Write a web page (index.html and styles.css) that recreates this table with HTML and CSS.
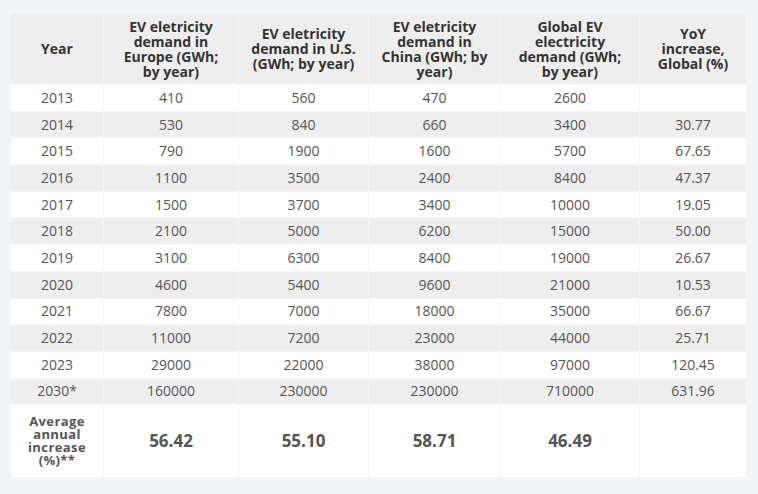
FILE: index.html
```html
<!DOCTYPE html>
<html>
<head>
<meta charset="utf-8">
<link rel="stylesheet" href="styles.css">
</head>
<body>
<div class="page">
<table class="ev">
<colgroup>
<col class="c1"><col class="c2"><col class="c3"><col class="c4"><col class="c5"><col class="c6">
</colgroup>
<thead>
<tr>
<th>Year</th>
<th>EV eletricity<br>demand in<br>Europe (GWh;<br>by year)</th>
<th>EV eletricity<br>demand in U.S.<br>(GWh; by year)</th>
<th>EV eletricity<br>demand in<br>China (GWh; by<br>year)</th>
<th>Global EV<br>electricity<br>demand (GWh;<br>by year)</th>
<th>YoY<br>increase,<br>Global (%)</th>
</tr>
</thead>
<tbody>
<tr><td>2013</td><td>410</td><td>560</td><td>470</td><td>2600</td><td></td></tr>
<tr><td>2014</td><td>530</td><td>840</td><td>660</td><td>3400</td><td>30.77</td></tr>
<tr><td>2015</td><td>790</td><td>1900</td><td>1600</td><td>5700</td><td>67.65</td></tr>
<tr><td>2016</td><td>1100</td><td>3500</td><td>2400</td><td>8400</td><td>47.37</td></tr>
<tr><td>2017</td><td>1500</td><td>3700</td><td>3400</td><td>10000</td><td>19.05</td></tr>
<tr><td>2018</td><td>2100</td><td>5000</td><td>6200</td><td>15000</td><td>50.00</td></tr>
<tr><td>2019</td><td>3100</td><td>6300</td><td>8400</td><td>19000</td><td>26.67</td></tr>
<tr><td>2020</td><td>4600</td><td>5400</td><td>9600</td><td>21000</td><td>10.53</td></tr>
<tr><td>2021</td><td>7800</td><td>7000</td><td>18000</td><td>35000</td><td>66.67</td></tr>
<tr><td>2022</td><td>11000</td><td>7200</td><td>23000</td><td>44000</td><td>25.71</td></tr>
<tr><td>2023</td><td>29000</td><td>22000</td><td>38000</td><td>97000</td><td>120.45</td></tr>
<tr><td>2030*</td><td>160000</td><td>230000</td><td>230000</td><td>710000</td><td>631.96</td></tr>
<tr class="avg"><td class="label">Average<br>annual<br>increase<br>(%)**</td><td>56.42</td><td>55.10</td><td>58.71</td><td>46.49</td><td></td></tr>
</tbody>
</table>
</div>
</body>
</html>
```

FILE: styles.css
```css
html, body {
  margin: 0;
  padding: 0;
  background: #f0f4f7;
}
body {
  font-family: "Open Sans", "Noto Sans", sans-serif;
  color: #555;
}
.page {
  padding: 12px 10px 18px 10px;
}
.ev {
  width: 736px;
  table-layout: fixed;
  border-collapse: collapse;
}
.c1 { width: 93px; }
.c2 { width: 135px; }
.c3 { width: 130px; }
.c4 { width: 132px; }
.c5 { width: 139px; }
.c6 { width: 107px; }
.ev th, .ev td {
  border: 1px solid #f4f7fa;
  text-align: center;
  vertical-align: middle;
  padding: 0 6px;
}
.ev th {
  background: #eeeeee;
  color: #333;
  font-weight: 700;
  font-size: 14px;
  line-height: 15px;
  height: 71px;
}
.ev td {
  background: #ffffff;
  font-size: 14px;
  height: 25.7px;
  line-height: 16px;
}
.ev tbody tr:nth-child(even) td {
  background: #eeeeee;
}
.ev .avg td {
  height: 72px;
  font-size: 17px;
  font-weight: 700;
  color: #555;
}
.ev .avg td.label {
  font-size: 13px;
  line-height: 13px;
  letter-spacing: 0.4px;
}
```
